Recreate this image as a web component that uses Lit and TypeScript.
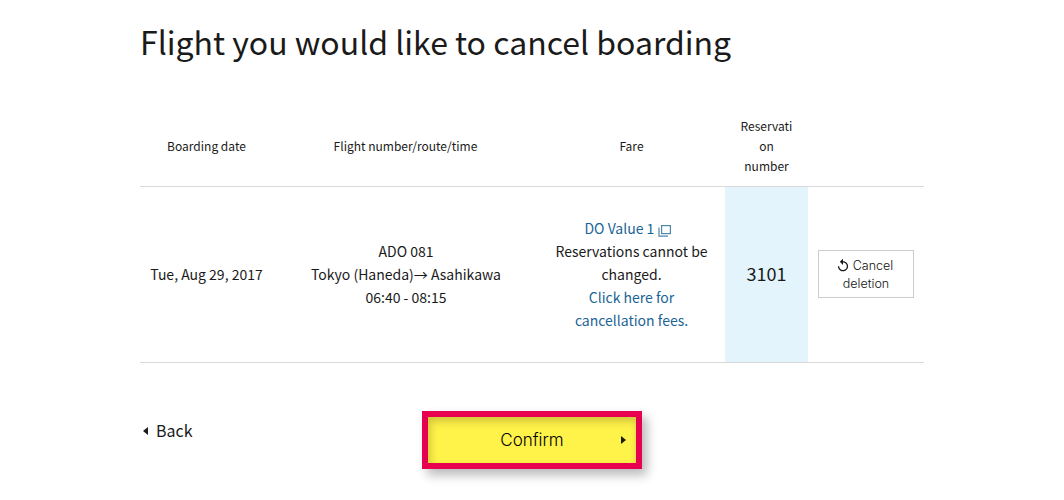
import { LitElement, html, css } from "lit";
import { customElement } from "lit/decorators.js";

@customElement("app-root")
export class AppRoot extends LitElement {
  static styles = css`
    :host {
      display: block;
      width: 1064px;
      height: 500px;
      overflow: hidden;
      background: #fff;
      font-family: "Noto Sans CJK JP", "Noto Sans", sans-serif;
      color: #1a1a1a;
    }
    .page { width: 784px; margin-left: 140px; padding-top: 17px; }
    h1 { margin: 0; font-size: 32px; font-weight: 400; line-height: 48px; height: 90px; }
    table { width: 784px; border-collapse: collapse; table-layout: fixed; }
    th {
      font-size: 12px; font-weight: 400; line-height: 20px; height: 77px;
      padding: 0 0 2px; text-align: center; border-bottom: 1px solid #d9d9d9;
    }
    th.res { overflow-wrap: anywhere; padding: 0 14px 2px; }
    td {
      font-size: 14px; line-height: 23px; height: 175px; padding: 0;
      text-align: center; border-bottom: 1px solid #d9d9d9;
    }
    td.flight { padding-left: 1px; }
    a { color: #1a6496; text-decoration: none; }
    .ext { vertical-align: -3px; margin-right: 8px; }
    .num { background: #e3f4fd; font-size: 18px; height: 173px; padding-bottom: 2px; }
    .fare { padding: 0 12px; }
    .cancel {
      display: block; width: 96px; height: 48px; box-sizing: border-box; margin: 0 auto 2px;
      border: 1px solid #cccccc; background: #fff; padding: 6px 4px;
      font-family: "Inter", "Liberation Sans", sans-serif; font-size: 12.5px; font-weight: 350; line-height: 18px; color: #111;
    }
    .cancel svg { vertical-align: -2px; margin: 0 4px 0 -2px; }
    .actions { display: flex; align-items: flex-start; margin-top: 48px; }
    .back { width: 279px; padding: 7px 0 0 3px; display: flex; align-items: center; gap: 8px; font-size: 16px; line-height: 24px; }
    .tri-l { width: 0; height: 0; margin-top: 2px; border: 4px solid transparent; border-left: 0; border-right: 5px solid #1a1a1a; }
    .tri-r { position: absolute; right: 10px; top: 19px; width: 0; height: 0; border: 4px solid transparent; border-right: 0; border-left: 5px solid #1a1a1a; }
    .confirm {
      position: relative; box-sizing: border-box; width: 220px; height: 58px;
      border: 6px solid #e6004f; background: #fff249;
      box-shadow: 5px 6px 10px rgba(0,0,0,.28), inset 2px 4px 8px rgba(0,0,0,.2);
      font-family: "Inter", "Liberation Sans", sans-serif; font-size: 17px; font-weight: 350; color: #000;
      display: flex; align-items: center; justify-content: center; padding: 0;
    }
  `;

  render() {
    return html`<div class="page">
      <h1>Flight you would like to cancel boarding</h1>
      <table>
        <colgroup>
          <col style="width:133px" /><col style="width:265px" /><col style="width:187px" /><col style="width:83px" /><col style="width:116px" />
        </colgroup>
        <thead><tr>
          <th>Boarding date</th><th>Flight number/route/time</th><th>Fare</th>
          <th class="res">Reservation number</th><th></th>
        </tr></thead>
        <tbody><tr>
          <td>Tue, Aug 29, 2017</td>
          <td class="flight">ADO 081<br />Tokyo (Haneda)→ Asahikawa<br />06:40 - 08:15</td>
          <td class="fare">
            <a href="#">DO Value 1
              <svg class="ext" width="13" height="13" viewBox="0 0 13 13" fill="none" stroke="#4f86ab" stroke-width="1.2">
                <rect x="3.6" y="1.6" width="8.8" height="8"></rect>
                <path d="M1 3.5v8.6h9"></path>
              </svg></a><br />
            Reservations cannot be changed.<br />
            <a href="#">Click here for cancellation fees.</a>
          </td>
          <td class="num">3101</td>
          <td>
            <button class="cancel">
              <svg width="12" height="14" viewBox="3 0 18 22" fill="#1a1a1a">
                <path d="M12 5V1L7 6l5 5V7c3.31 0 6 2.69 6 6s-2.69 6-6 6-6-2.69-6-6H4c0 4.42 3.58 8 8 8s8-3.58 8-8-3.58-8-8-8z"></path>
              </svg>Cancel deletion
            </button>
          </td>
        </tr></tbody>
      </table>
      <div class="actions">
        <div class="back"><span class="tri-l"></span>Back</div>
        <button class="confirm">Confirm<span class="tri-r"></span></button>
      </div>
    </div>`;
  }
}
